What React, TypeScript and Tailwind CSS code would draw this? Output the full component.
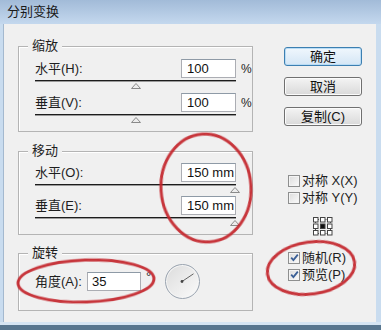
import React from 'react'

const FONT = "font-['Liberation_Sans','Noto_Sans_CJK_SC',sans-serif]"

function Thumb() {
  return (
    <svg width="10" height="6" viewBox="0 0 10 6">
      <polygon points="5,0.5 9.5,5.5 0.5,5.5" fill="#ececec" stroke="#8a8a8a" />
    </svg>
  )
}

function SliderRow({ label, value, unit, end, last }: { label: string; value: string; unit: string; end?: boolean; last?: boolean }) {
  return (
    <div className={last ? '' : 'mb-[4px]'}>
      <div className="flex items-center h-[19px]">
        <span className="text-[13px] text-[#1e1e1e]">{label}</span>
        <div className="ml-auto w-[55px] h-[19px] bg-white border border-[#abadb3] border-t-[#8e9aa6] flex items-center pl-[5px] text-[13px] text-[#111]">
          {value}
        </div>
        <span className="w-[16px] pl-[5px] text-[12px] text-[#1e1e1e]">{unit}</span>
      </div>
      <div className="mt-[2px] w-[201px] h-[2px] bg-[#1c1c1c] border-b border-[#9a9a9a]" />
      <div className={end ? 'mt-[1px] w-[205px] h-[6px] flex justify-end' : 'mt-[1px] w-[201px] h-[6px] flex justify-center'}>
        <Thumb />
      </div>
    </div>
  )
}

function Group({ title, className, children }: { title: string; className: string; children: React.ReactNode }) {
  return (
    <div className={`relative border border-[#b4b4b4] shadow-[inset_1px_1px_0_#ffffff] ${className}`}>
      <span className="absolute -top-[10px] left-[9px] px-[4px] bg-[#f0f0f0] text-[13px] leading-[18px] text-[#1e1e1e]">{title}</span>
      {children}
    </div>
  )
}

function Button({ label, primary }: { label: string; primary?: boolean }) {
  return (
    <div
      className={
        primary
          ? 'h-[19px] w-[78px] rounded-[3px] border border-[#3c7fb1] bg-linear-to-b from-[#f0f7fd] to-[#d4e6f5] shadow-[inset_0_0_0_1px_#b9dcf5] flex items-center justify-center text-[13px] text-[#111]'
          : 'h-[19px] w-[78px] rounded-[3px] border border-[#707070] bg-linear-to-b from-[#f4f4f4] to-[#d9d9d9] shadow-[inset_0_0_0_1px_#fbfbfb] flex items-center justify-center text-[13px] text-[#111]'
      }
    >
      {label}
    </div>
  )
}

function Check({ label, checked }: { label: string; checked?: boolean }) {
  return (
    <div className="flex items-center h-[17px] pl-[4px]">
      <div className="w-[12px] h-[12px] border border-[#8e8f8f] bg-linear-to-br from-[#dcdcdc] to-[#fbfbfb] shadow-[inset_0_0_0_1px_#f4f4f4] flex items-center justify-center">
        {checked && (
          <svg width="9" height="9" viewBox="0 0 9 9">
            <path d="M1.2 4.6 L3.4 7 L7.8 1.6" fill="none" stroke="#3a5f96" strokeWidth="1.8" />
          </svg>
        )}
      </div>
      <span className="ml-[2px] text-[13px] text-[#1e1e1e]">{label}</span>
    </div>
  )
}

function RefPoint() {
  const pos = [0.5, 7.5, 14.5]
  return (
    <svg width="20" height="19" viewBox="0 0 20 19">
      <g stroke="#555" strokeWidth="1" strokeDasharray="1 1" fill="none">
        <path d="M5 2.5 H7.5 M12.5 2.5 H14.5 M5 16.5 H7.5 M12.5 16.5 H14.5 M2.5 5 V7.5 M2.5 12 V14 M17.5 5 V7.5 M17.5 12 V14" />
      </g>
      {pos.map((x) =>
        [0.5, 7, 13.5].map((y) => (
          <rect
            key={`${x}-${y}`}
            x={x}
            y={y}
            width="4.5"
            height="4.5"
            fill={x === 7.5 && y === 7 ? '#111' : '#fff'}
            stroke="#444"
            strokeWidth="1"
          />
        ))
      )}
    </svg>
  )
}

export default function App() {
  return (
    <div className={`relative w-[381px] h-[330px] overflow-hidden bg-[#c9dcef] flex flex-col ${FONT}`}>
      <div className="h-[24px] shrink-0 bg-linear-to-b from-[#a2bbd8] to-[#c4d8ee] flex items-center pl-[7px] text-[13px] text-[#1a1a1a]">
        分别变换
      </div>

      <div className="ml-[3px] mr-[5px] h-[298px] shrink-0 bg-[#f0f0f0] border-l border-[#a4b9cf] flex pl-[14px]">
        <div className="w-[235px] pt-[22px]">
          <Group title="缩放" className="h-[86px] pt-[12px] pl-[16px]">
            <SliderRow label="水平(H):" value="100" unit="%" />
            <SliderRow label="垂直(V):" value="100" unit="%" last />
          </Group>

          <Group title="移动" className="mt-[19px] h-[84px] pt-[11px] pl-[16px]">
            <div className="mb-[-1px]">
              <SliderRow label="水平(O):" value="150 mm" unit="" end />
            </div>
            <SliderRow label="垂直(E):" value="150 mm" unit="" end last />
          </Group>

          <Group title="旋转" className="mt-[18px] h-[58px] pt-[10px] pl-[16px]">
            <div className="flex items-center h-[35px]">
              <span className="text-[13px] text-[#1e1e1e]">角度(A):</span>
              <div className="ml-[5px] w-[54px] h-[19px] bg-white border border-[#abadb3] border-t-[#8e9aa6] flex items-center pl-[4px] text-[13px] text-[#111]">
                35
              </div>
              <span className="self-start mt-[6px] ml-[5px] text-[13px] leading-none text-[#1e1e1e]">°</span>
              <div className="ml-[14px] w-[35px] h-[35px] rounded-full border border-[#9aa4b0] bg-linear-to-br from-[#dcdcdc] to-[#fbfbfb] shadow-[inset_0_0_0_1px_#f6f6f6] flex items-center justify-center">
                <svg width="33" height="33" viewBox="0 0 33 33">
                  <line x1="16" y1="16.5" x2="27.5" y2="8.8" stroke="#555" strokeWidth="0.9" />
                  <circle cx="16" cy="16.5" r="1.4" fill="#444" />
                </svg>
              </div>
            </div>
          </Group>
        </div>

        <div className="ml-[31px] w-[78px] pt-[23px] flex flex-col">
          <Button label="确定" primary />
          <div className="mt-[11px]">
            <Button label="取消" />
          </div>
          <div className="mt-[11px]">
            <Button label="复制(C)" />
          </div>
          <div className="mt-[46px]">
            <Check label="对称 X(X)" />
            <Check label="对称 Y(Y)" />
          </div>
          <div className="mt-[11px] flex justify-center">
            <RefPoint />
          </div>
          <div className="mt-[13px]">
            <Check label="随机(R)" checked />
            <Check label="预览(P)" checked />
          </div>
        </div>
      </div>

      <div className="h-[3px] shrink-0 bg-[#d6e5f3]" />
      <div className="flex-1 bg-[#58768f]" />

      <svg className="absolute inset-0 pointer-events-none" width="381" height="330" viewBox="0 0 381 330">
        <g fill="none" stroke="#c3242b" strokeWidth="3" opacity="0.92">
          <ellipse cx="206" cy="188" rx="45" ry="54" transform="rotate(-4 206 188)" />
          <ellipse cx="86" cy="281" rx="68" ry="21" transform="rotate(-2 86 281)" />
          <ellipse cx="311" cy="268" rx="44" ry="26" transform="rotate(-8 311 268)" />
        </g>
      </svg>
    </div>
  )
}
